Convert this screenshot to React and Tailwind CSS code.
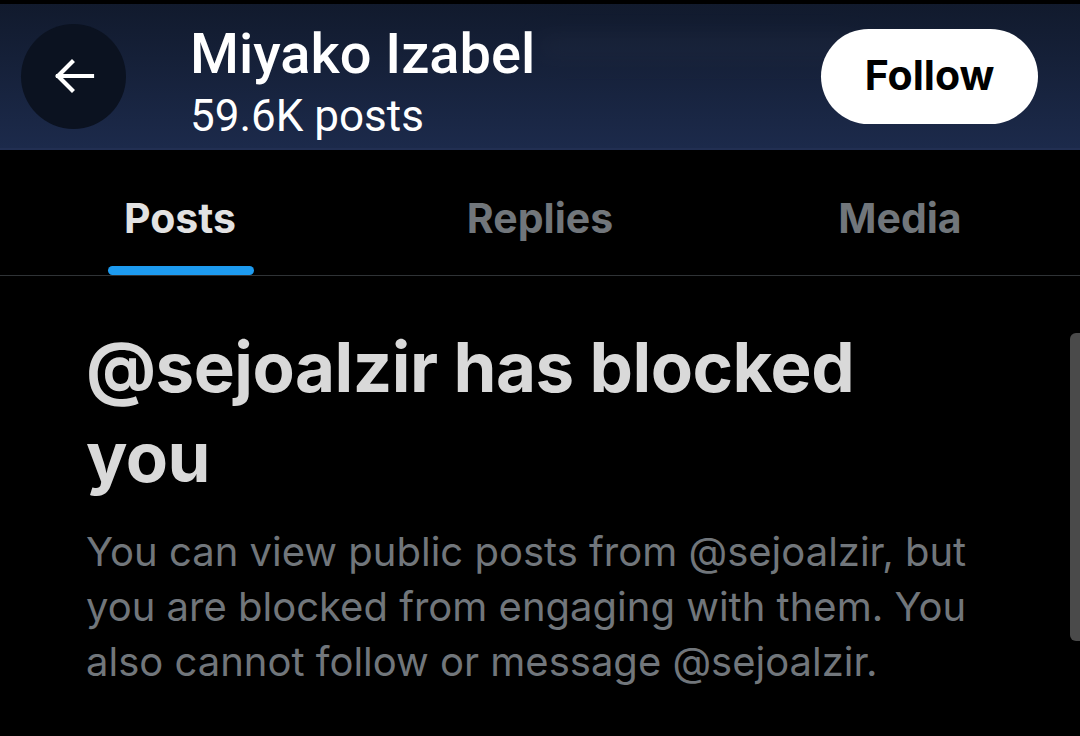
import React from "react";

export default function App() {
  return (
    <div className="w-[1080px] h-[736px] bg-black overflow-hidden relative" style={{ fontFamily: "Inter, 'Open Sans', sans-serif" }}>
      <div className="h-[4px] bg-black" />
      <header className="h-[146px] bg-gradient-to-b from-[#111a2d] to-[#1c2a4b] border-b-2 border-[#222f52] flex items-center pl-[21px] pr-[42px] relative">
        <div className="absolute left-[540px] top-[36px] w-[320px] h-[14px] bg-[#2a3248] opacity-40 blur-md" />
        <button className="w-[105px] h-[105px] rounded-full bg-[#0b1220] flex items-center justify-center shrink-0">
          <svg width="48" height="48" viewBox="0 0 48 48" fill="none" stroke="white" strokeWidth="4.2" strokeLinecap="square" strokeLinejoin="miter">
            <path d="M42 24H8" />
            <path d="M22 10L8 24l14 14" />
          </svg>
        </button>
        <div className="ml-[64px] self-start mt-[18px] flex flex-col relative" style={{ fontFamily: "Roboto, sans-serif" }}>
          <div className="text-white text-[56px] leading-[64px] font-medium">Miyako Izabel</div>
          <div className="text-white text-[44px] leading-[48px] mt-[6px]">59.6K posts</div>
        </div>
        <div className="flex-1" />
        <button className="w-[217px] h-[95px] rounded-full bg-white text-black text-[41px] font-bold relative">Follow</button>
      </header>
      <nav className="h-[126px] flex border-b border-[#2f3336]">
        <div className="w-[360px] flex flex-col items-center pt-[43px]">
          <span className="text-[#e2e2e2] text-[41px] leading-[50px] font-bold">Posts</span>
          <div className="w-[146px] h-[9px] rounded-full bg-[#1d9bf0] mt-[23px] ml-[2px]" />
        </div>
        <div className="w-[360px] flex flex-col items-center pt-[43px]">
          <span className="text-[#71767b] text-[41px] leading-[50px] font-bold">Replies</span>
        </div>
        <div className="w-[360px] flex flex-col items-center pt-[43px]">
          <span className="text-[#71767b] text-[41px] leading-[50px] font-bold">Media</span>
        </div>
      </nav>
      <main className="pl-[86px] pt-[46px]">
        <h1 className="text-[#d9d9d9] text-[69px] leading-[90px] font-bold tracking-[-0.5px] w-[880px]">@sejoalzir has blocked you</h1>
        <p className="text-[#71767b] text-[40px] leading-[55px] mt-[22px] w-[900px]">You can view public posts from @sejoalzir, but you are blocked from engaging with them. You also cannot follow or message @sejoalzir.</p>
      </main>
      <div className="absolute right-0 top-[333px] w-[10px] h-[308px] rounded-l-[6px] bg-[#4a4a4a]" />
    </div>
  );
}
